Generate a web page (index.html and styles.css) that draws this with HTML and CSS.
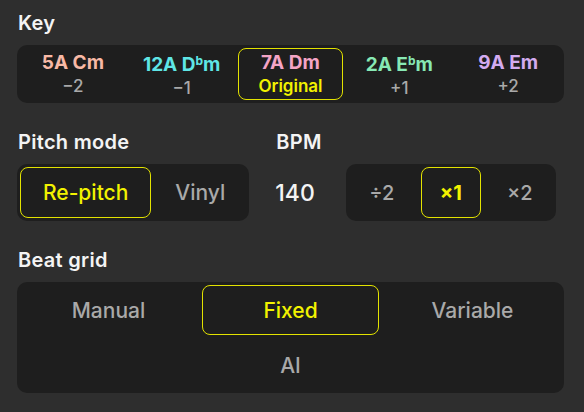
FILE: index.html
```html
<!DOCTYPE html>
<html lang="en">
<head>
<meta charset="utf-8">
<link rel="stylesheet" href="styles.css">
</head>
<body>
<main class="app">
  <section class="section">
    <h2 class="label">Key</h2>
    <div class="panel key-panel">
      <div class="key-item"><span class="key-name c-salmon">5A Cm</span><span class="key-off">−2</span></div>
      <div class="key-item"><span class="key-name c-cyan">12A D<span class="flat">b</span>m</span><span class="key-off">−1</span></div>
      <div class="key-item selected"><span class="key-name c-pink">7A Dm</span><span class="key-off orig">Original</span></div>
      <div class="key-item"><span class="key-name c-green">2A E<span class="flat">b</span>m</span><span class="key-off">+1</span></div>
      <div class="key-item"><span class="key-name c-lav">9A Em</span><span class="key-off">+2</span></div>
    </div>
  </section>

  <section class="section row2">
    <div class="col">
      <h2 class="label">Pitch mode</h2>
      <div class="panel seg">
        <div class="seg-item selected">Re-pitch</div>
        <div class="seg-item">Vinyl</div>
      </div>
    </div>
    <div class="col">
      <h2 class="label">BPM</h2>
      <div class="bpm-row">
        <span class="bpm-value">140</span>
        <div class="panel mult">
          <div class="mult-item">÷2</div>
          <div class="mult-item selected">×1</div>
          <div class="mult-item">×2</div>
        </div>
      </div>
    </div>
  </section>

  <section class="section">
    <h2 class="label">Beat grid</h2>
    <div class="panel grid">
      <div class="grid-item">Manual</div>
      <div class="grid-item selected">Fixed</div>
      <div class="grid-item">Variable</div>
      <div class="grid-item"></div>
      <div class="grid-item">AI</div>
    </div>
  </section>
</main>
</body>
</html>
```

FILE: styles.css
```css
* { box-sizing: border-box; }
html, body { margin: 0; padding: 0; }
body {
  background: #2e2e2e;
  font-family: Inter, "Noto Sans", sans-serif;
  color: #f2f2f2;
  width: 584px;
  height: 412px;
  overflow: hidden;
}
.app {
  padding: 11px 20px 0 17px;
  display: flex;
  flex-direction: column;
  gap: 27px;
}
.section { display: flex; flex-direction: column; }
.label {
  margin: 0 0 10px 1px;
  font-size: 20px;
  line-height: 24px;
  font-weight: 600;
  letter-spacing: 0.3px;
  color: #f4f4f4;
}
.panel {
  background: #1e1e1e;
  border-radius: 10px;
  padding: 3px;
}

/* Key */
.key-panel {
  display: grid;
  grid-template-columns: repeat(5, 1fr);
  gap: 3px;
  width: 547px;
}
.key-item {
  height: 52px;
  border-radius: 8px;
  border: 1px solid transparent;
  display: flex;
  flex-direction: column;
  align-items: center;
  justify-content: center;
}
.key-item.selected { border-color: #e2e200; }
.key-name {
  font-size: 19px;
  font-weight: 700;
  line-height: 24px;
}
.flat {
  font-size: 12px;
  vertical-align: 6px;
  font-weight: 700;
}
.key-off {
  font-size: 17px;
  line-height: 23px;
  font-weight: 500;
  color: #a9a9a9;
}
.key-off.orig { color: #f2f200; font-weight: 600; }
.c-salmon { color: #f8b9a6; }
.c-cyan { color: #5fe6e6; }
.c-pink { color: #f4a4c6; }
.c-green { color: #87e8b4; }
.c-lav { color: #d3abf0; }

/* Row 2 */
.row2 { flex-direction: row; gap: 26px; }
.col { display: flex; flex-direction: column; }
.seg {
  display: flex;
  gap: 3px;
  height: 57px;
}
.seg-item {
  padding: 0 20px;
  border-radius: 8px;
  border: 1px solid transparent;
  display: flex;
  align-items: center;
  font-size: 21px;
  font-weight: 500;
  color: #a9a9a9;
}
.seg-item.selected { color: #f2f200; border-color: #e2e200; padding: 0 22px; }
.bpm-row {
  display: flex;
  align-items: center;
  gap: 31px;
}
.bpm-value {
  font-size: 23px;
  font-weight: 500;
  color: #f4f4f4;
}
.mult {
  display: flex;
  height: 57px;
  padding: 3px 6px;
  gap: 9px;
}
.mult-item {
  width: 60px;
  border-radius: 8px;
  border: 1px solid transparent;
  display: flex;
  align-items: center;
  justify-content: center;
  font-size: 20px;
  font-weight: 500;
  color: #a9a9a9;
}
.mult-item.selected { color: #f2f200; font-weight: 700; border-color: #e2e200; }

/* Beat grid */
.grid {
  display: grid;
  grid-template-columns: repeat(3, 1fr);
  grid-auto-rows: 50px;
  gap: 5px;
  width: 547px;
}
.grid-item {
  border-radius: 8px;
  border: 1px solid transparent;
  display: flex;
  align-items: center;
  justify-content: center;
  font-size: 21px;
  font-weight: 500;
  color: #a9a9a9;
}
.grid-item.selected { color: #f2f200; border-color: #e2e200; }
```
